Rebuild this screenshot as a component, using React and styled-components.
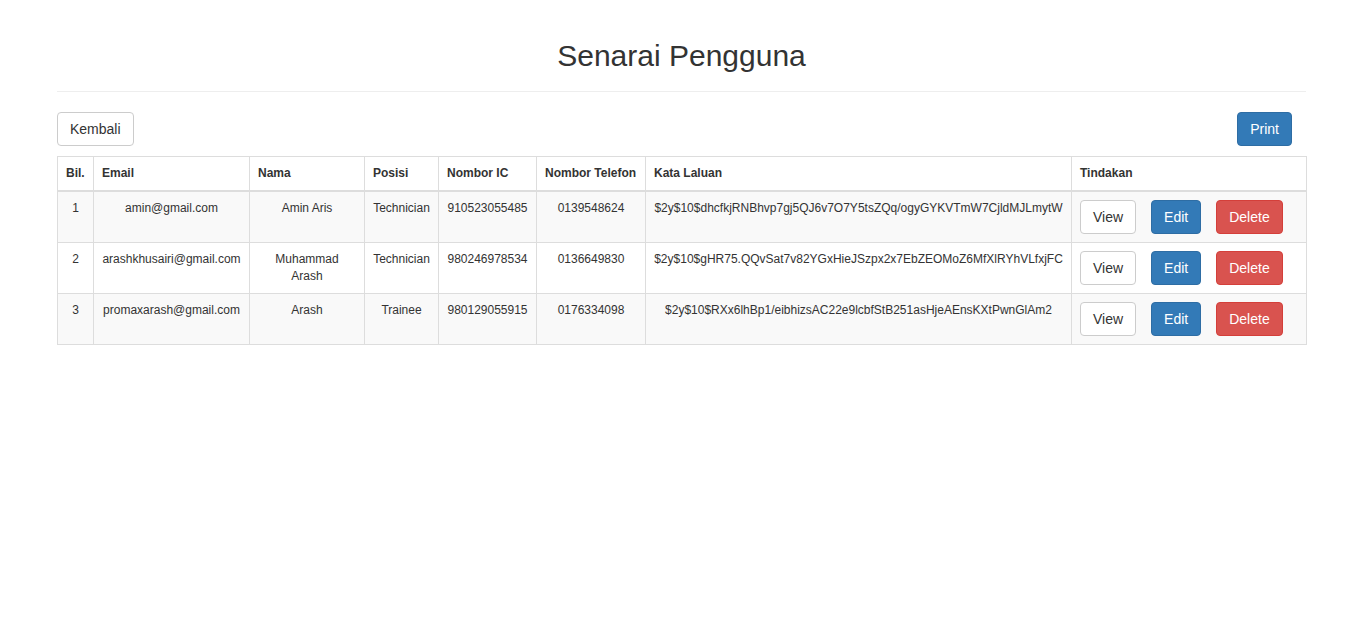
import React from "react";
import styled, { createGlobalStyle } from "styled-components";

const Global = createGlobalStyle`
  html, body { margin: 0; padding: 0; background: #fff; }
  body {
    font-family: "Liberation Sans", Arial, Helvetica, sans-serif;
    font-size: 14px;
    line-height: 1.42857143;
    color: #333;
  }
  * { box-sizing: border-box; }
`;

const Page = styled.div`
  padding: 0 59px 0 57px;
`;

const Header = styled.div`
  padding-top: 39px;
  padding-bottom: 19px;
  border-bottom: 1px solid #eee;
`;

const Title = styled.h2`
  margin: 0;
  font-size: 30px;
  font-weight: 500;
  line-height: 33px;
  text-align: center;
  color: #333;
`;

const Toolbar = styled.div`
  display: flex;
  justify-content: space-between;
  align-items: center;
  margin-top: 20px;
  margin-bottom: 10px;
  padding-right: 14px;
`;

const variants = {
  default: { bg: "#fff", border: "#ccc", color: "#333" },
  primary: { bg: "#337ab7", border: "#2e6da4", color: "#fff" },
  danger: { bg: "#d9534f", border: "#d43f3a", color: "#fff" },
};

const Button = styled.button`
  display: inline-block;
  height: 34px;
  padding: 6px 12px;
  font-family: inherit;
  font-size: 14px;
  line-height: 20px;
  border-radius: 4px;
  border: 1px solid ${(p) => variants[p.$variant || "default"].border};
  background: ${(p) => variants[p.$variant || "default"].bg};
  color: ${(p) => variants[p.$variant || "default"].color};
  cursor: pointer;
  white-space: nowrap;
`;

const Table = styled.table`
  width: 100%;
  table-layout: fixed;
  border-collapse: collapse;
  border-spacing: 0;
  border: 1px solid #ddd;
  font-size: 12px;
  line-height: 17px;
`;

const Th = styled.th`
  padding: 8px;
  text-align: left;
  font-weight: bold;
  color: #333;
  border: 1px solid #ddd;
  border-bottom: 2px solid #ddd;
  vertical-align: bottom;
  white-space: nowrap;
`;

const Row = styled.tr`
  background: ${(p) => (p.$odd ? "#f9f9f9" : "#fff")};
`;

const Td = styled.td`
  padding: 8px;
  border: 1px solid #ddd;
  vertical-align: top;
  text-align: ${(p) => p.$align || "center"};
  color: #333;
  overflow: hidden;
`;

const Name = styled.div`
  max-width: 92px;
  margin: 0 auto;
`;

const Pass = styled.div`
  white-space: nowrap;
  text-align: center;
  margin: 0 -2px;
`;

const Actions = styled.div`
  display: flex;
  gap: 15px;
`;

const cols = [36, 156, 115, 74, 98, 109, 426, 235];

const users = [
  {
    email: "amin@gmail.com",
    nama: "Amin Aris",
    posisi: "Technician",
    ic: "910523055485",
    tel: "0139548624",
    pass: "$2y$10$dhcfkjRNBhvp7gj5QJ6v7O7Y5tsZQq/ogyGYKVTmW7CjldMJLmytW",
  },
  {
    email: "arashkhusairi@gmail.com",
    nama: "Muhammad Arash",
    posisi: "Technician",
    ic: "980246978534",
    tel: "0136649830",
    pass: "$2y$10$gHR75.QQvSat7v82YGxHieJSzpx2x7EbZEOMoZ6MfXlRYhVLfxjFC",
  },
  {
    email: "promaxarash@gmail.com",
    nama: "Arash",
    posisi: "Trainee",
    ic: "980129055915",
    tel: "0176334098",
    pass: "$2y$10$RXx6lhBp1/eibhizsAC22e9lcbfStB251asHjeAEnsKXtPwnGlAm2",
  },
];

export default function App() {
  return (
    <>
      <Global />
      <Page>
        <Header>
          <Title>Senarai Pengguna</Title>
        </Header>
        <Toolbar>
          <Button>Kembali</Button>
          <Button $variant="primary">Print</Button>
        </Toolbar>
        <Table>
          <colgroup>
            {cols.map((w, i) => (
              <col key={i} style={{ width: w }} />
            ))}
          </colgroup>
          <thead>
            <tr>
              <Th>Bil.</Th>
              <Th>Email</Th>
              <Th>Nama</Th>
              <Th>Posisi</Th>
              <Th>Nombor IC</Th>
              <Th>Nombor Telefon</Th>
              <Th>Kata Laluan</Th>
              <Th>Tindakan</Th>
            </tr>
          </thead>
          <tbody>
            {users.map((u, i) => (
              <Row key={i} $odd={i % 2 === 0}>
                <Td>{i + 1}</Td>
                <Td>{u.email}</Td>
                <Td>
                  <Name>{u.nama}</Name>
                </Td>
                <Td>{u.posisi}</Td>
                <Td>{u.ic}</Td>
                <Td>{u.tel}</Td>
                <Td>
                  <Pass>{u.pass}</Pass>
                </Td>
                <Td $align="left">
                  <Actions>
                    <Button>View</Button>
                    <Button $variant="primary">Edit</Button>
                    <Button $variant="danger">Delete</Button>
                  </Actions>
                </Td>
              </Row>
            ))}
          </tbody>
        </Table>
      </Page>
    </>
  );
}
